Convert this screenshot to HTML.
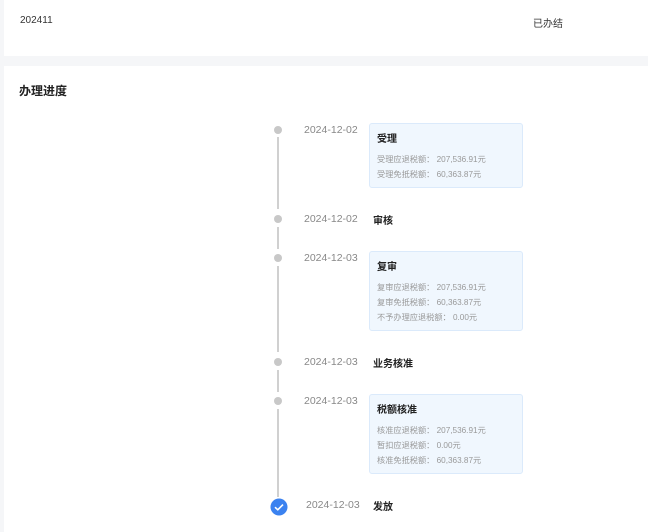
<!DOCTYPE html><html><head><meta charset="utf-8"><style>
body{margin:0;width:648px;height:532px;background:#f5f6f8;font-family:"Liberation Sans","Noto Sans CJK SC",sans-serif;position:relative;overflow:hidden}
.c{position:absolute;background:#fff}
.a{position:absolute;white-space:nowrap}
.dot{position:absolute;left:274px;width:8px;height:8px;border-radius:50%;background:#c8c8c8}
.ln{position:absolute;left:277px;width:2px;background:#d0d0d0}
.d{position:absolute;left:304px;font-size:10.5px;color:#888}
.t{position:absolute;left:373px;font-size:10px;font-weight:bold;color:#222}
.card{position:absolute;left:369px;width:152px;background:#f0f7fe;border:1px solid #dbeafb;border-radius:3px}
.card b{display:block;font-size:10px;color:#222;margin:6px 0 0 7px;height:23px}
.card div{font-size:8.2px;color:#999;margin-left:7px;height:15px}
</style></head><body>
<div class="c" style="left:4px;top:0;width:644px;height:56px"></div>
<div class="a" style="left:20px;top:15px;font-size:10px;color:#333">202411</div>
<div class="a" style="left:533px;top:15px;font-size:10px;color:#333">已办结</div>
<div class="c" style="left:4px;top:66px;width:644px;height:466px"></div>
<div class="a" style="left:19px;top:82px;font-size:12px;font-weight:bold;color:#222">办理进度</div>

<div class="dot" style="top:126px"></div><div class="ln" style="top:137px;height:72px"></div>
<div class="d" style="top:124px">2024-12-02</div>
<div class="card" style="top:123px;height:63px"><b>受理</b><div>受理应退税额： 207,536.91元</div><div>受理免抵税额： 60,363.87元</div></div>

<div class="dot" style="top:215px"></div><div class="ln" style="top:227px;height:22px"></div>
<div class="d" style="top:213px">2024-12-02</div><div class="t" style="top:212px">审核</div>

<div class="dot" style="top:254px"></div><div class="ln" style="top:266px;height:86px"></div>
<div class="d" style="top:252px">2024-12-03</div>
<div class="card" style="top:251px;height:78px"><b>复审</b><div>复审应退税额： 207,536.91元</div><div>复审免抵税额： 60,363.87元</div><div>不予办理应退税额： 0.00元</div></div>

<div class="dot" style="top:358px"></div><div class="ln" style="top:370px;height:22px"></div>
<div class="d" style="top:356px">2024-12-03</div><div class="t" style="top:355px">业务核准</div>

<div class="dot" style="top:397px"></div><div class="ln" style="top:409px;height:88px"></div>
<div class="d" style="top:395px">2024-12-03</div>
<div class="card" style="top:394px;height:78px"><b>税额核准</b><div>核准应退税额： 207,536.91元</div><div>暂扣应退税额： 0.00元</div><div>核准免抵税额： 60,363.87元</div></div>

<svg style="position:absolute;left:270px;top:498px" width="18" height="18" viewBox="0 0 18 18"><circle cx="9" cy="9" r="8.5" fill="#3b82f0"/><path d="M5 9.2l2.8 2.6L13 6.6" stroke="#fff" stroke-width="1.6" fill="none"/></svg>
<div class="d" style="top:499px;left:306px">2024-12-03</div><div class="t" style="top:498px">发放</div>
</body></html>
